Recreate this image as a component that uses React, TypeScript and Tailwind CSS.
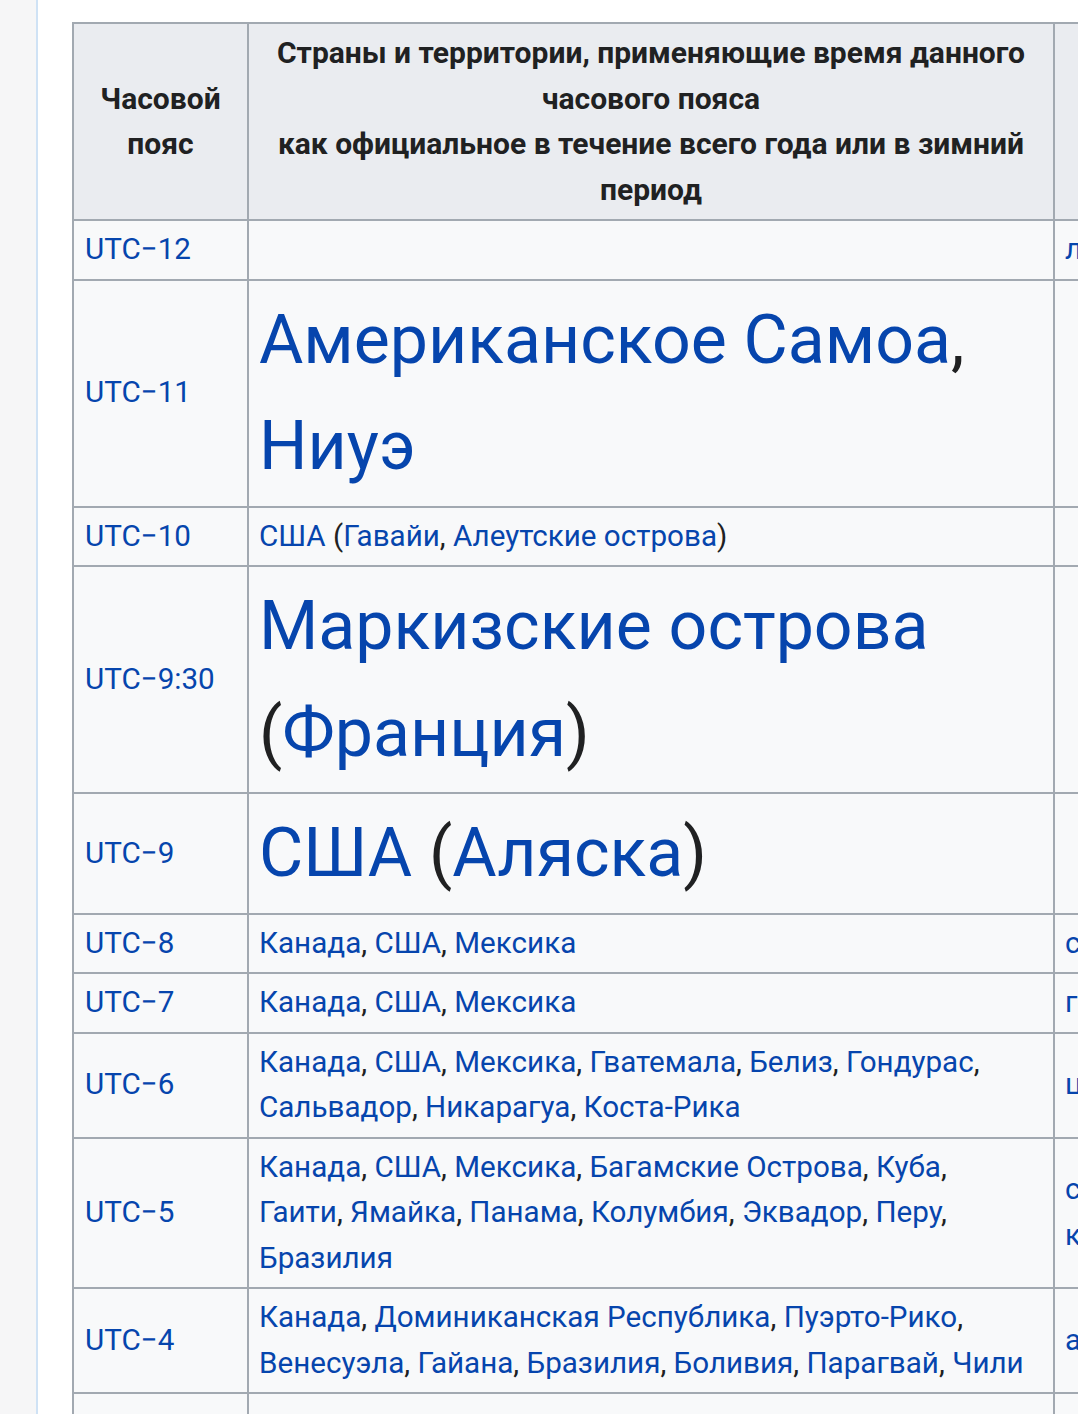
import React from "react";

const L = ({ children }: { children: React.ReactNode }) => (
  <span className="text-[#0645ad]">{children}</span>
);
const T = ({ children }: { children: React.ReactNode }) => (
  <span className="text-[#202122]">{children}</span>
);

const cell1 = "bg-[#f8f9fa] pl-[11px] pr-[10px] py-[6px] flex items-center";
const cell = "bg-[#f8f9fa] pl-[10px] pr-[10px] py-[6px] flex items-center";
const small = "text-[29.6px] leading-[45.5px]";
const big = "text-[68px] leading-[106.5px]";

function List({ items }: { items: string[] }) {
  return (
    <>
      {items.map((it, i) => (
        <React.Fragment key={i}>
          <L>{it}</L>
          {i < items.length - 1 ? <T>, </T> : null}
        </React.Fragment>
      ))}
    </>
  );
}

export default function App() {
  const font = { fontFamily: "Roboto, 'Noto Sans', sans-serif" };
  return (
    <div className="w-[1078px] h-[1414px] overflow-hidden bg-white flex" style={font}>
      <div className="w-[36px] shrink-0 bg-[#f6f6f7]" />
      <div className="w-[2px] shrink-0 bg-[#cfe2f5]" />
      <div className="flex-1 overflow-hidden pt-[22px] pl-[34px]">
        <div className="grid grid-cols-[173px_804px_320px] gap-[2px] p-[2px] bg-[#a2a9b1] w-max">
          {/* header */}
          <div className="bg-[#eaecf0] px-[8px] pt-[6px] pb-[7px] flex items-center justify-center text-center font-bold text-[#202122] text-[30px] leading-[45.5px]">
            <div>Часовой<br />пояс</div>
          </div>
          <div className="bg-[#eaecf0] px-[8px] pt-[6px] pb-[7px] flex items-center justify-center text-center font-bold text-[#202122] text-[30px] leading-[45.5px] whitespace-nowrap">
            <div>
              Страны и территории, применяющие время данного
              <br />
              часового пояса
              <br />
              как официальное в течение всего года или в зимний
              <br />
              период
            </div>
          </div>
          <div className="bg-[#eaecf0] px-[12px] py-[6px]" />

          {/* UTC-12 */}
          <div className={`${cell1} ${small}`}><L>UTC−12</L></div>
          <div className={`${cell} ${small}`} />
          <div className={`${cell} ${small} whitespace-nowrap`}><L>линия перемены дат</L></div>

          {/* UTC-11 */}
          <div className={`${cell1} ${small}`}><L>UTC−11</L></div>
          <div className={`${cell} ${big} whitespace-nowrap`}>
            <div>
              <L>Американское Самоа</L><T>,</T>
              <br />
              <L>Ниуэ</L>
            </div>
          </div>
          <div className={`${cell} ${small}`} />

          {/* UTC-10 */}
          <div className={`${cell1} ${small}`}><L>UTC−10</L></div>
          <div className={`${cell} ${small} whitespace-nowrap`}>
            <div>
              <L>США</L> <T>(</T><L>Гавайи</L><T>, </T><L>Алеутские острова</L><T>)</T>
            </div>
          </div>
          <div className={`${cell} ${small}`} />

          {/* UTC-9:30 */}
          <div className={`${cell1} ${small}`}><L>UTC−9:30</L></div>
          <div className={`${cell} ${big} whitespace-nowrap`}>
            <div>
              <L>Маркизские острова</L>
              <br />
              <T>(</T><L>Франция</L><T>)</T>
            </div>
          </div>
          <div className={`${cell} ${small}`} />

          {/* UTC-9 */}
          <div className={`${cell1} ${small}`}><L>UTC−9</L></div>
          <div className={`${cell} ${big} whitespace-nowrap`}>
            <div>
              <L>США</L> <T>(</T><L>Аляска</L><T>)</T>
            </div>
          </div>
          <div className={`${cell} ${small}`} />

          {/* UTC-8 */}
          <div className={`${cell1} ${small}`}><L>UTC−8</L></div>
          <div className={`${cell} ${small} whitespace-nowrap`}>
            <div><List items={["Канада", "США", "Мексика"]} /></div>
          </div>
          <div className={`${cell} ${small} whitespace-nowrap`}><L>сезонное время</L></div>

          {/* UTC-7 */}
          <div className={`${cell1} ${small}`}><L>UTC−7</L></div>
          <div className={`${cell} ${small} whitespace-nowrap`}>
            <div><List items={["Канада", "США", "Мексика"]} /></div>
          </div>
          <div className={`${cell} ${small} whitespace-nowrap`}><L>горное время</L></div>

          {/* UTC-6 */}
          <div className={`${cell1} ${small}`}><L>UTC−6</L></div>
          <div className={`${cell} ${small} whitespace-nowrap`}>
            <div>
              <List items={["Канада", "США", "Мексика", "Гватемала", "Белиз", "Гондурас"]} />
              <T>,</T>
              <br />
              <List items={["Сальвадор", "Никарагуа", "Коста-Рика"]} />
            </div>
          </div>
          <div className={`${cell} ${small} whitespace-nowrap`}><L>центральное время</L></div>

          {/* UTC-5 */}
          <div className={`${cell1} ${small}`}><L>UTC−5</L></div>
          <div className={`${cell} ${small} whitespace-nowrap`}>
            <div>
              <List items={["Канада", "США", "Мексика", "Багамские Острова", "Куба"]} />
              <T>,</T>
              <br />
              <List items={["Гаити", "Ямайка", "Панама", "Колумбия", "Эквадор", "Перу"]} />
              <T>,</T>
              <br />
              <L>Бразилия</L>
            </div>
          </div>
          <div className={`${cell} ${small} whitespace-nowrap`}>
            <div>
              <L>северо-восточное</L>
              <br />
              <L>канадское время</L>
            </div>
          </div>

          {/* UTC-4 */}
          <div className={`${cell1} ${small}`}><L>UTC−4</L></div>
          <div className={`${cell} ${small} whitespace-nowrap`}>
            <div>
              <List items={["Канада", "Доминиканская Республика", "Пуэрто-Рико"]} />
              <T>,</T>
              <br />
              <List items={["Венесуэла", "Гайана", "Бразилия", "Боливия", "Парагвай", "Чили"]} />
            </div>
          </div>
          <div className={`${cell} ${small} whitespace-nowrap`}><L>атлантическое время</L></div>

          {/* next row (cut off) */}
          <div className={`${cell1} ${small} h-[120px]`} />
          <div className={`${cell} ${small}`} />
          <div className={`${cell} ${small}`} />
        </div>
      </div>
    </div>
  );
}
